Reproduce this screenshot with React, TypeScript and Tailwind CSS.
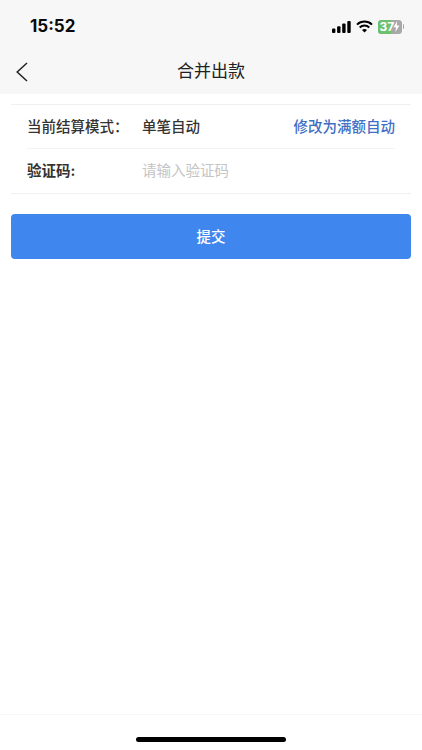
const font = "font-['Inter','Noto_Sans_CJK_SC',sans-serif]";

function StatusIcons() {
  return (
    <div className="flex items-center gap-[5px]">
      <svg width="19" height="12" viewBox="0 0 19 12" fill="#000">
        <rect x="0" y="7.5" width="3.4" height="4.5" rx="1" />
        <rect x="5.1" y="5.2" width="3.4" height="6.8" rx="1" />
        <rect x="10.2" y="2.6" width="3.4" height="9.4" rx="1" />
        <rect x="15.3" y="0" width="3.4" height="12" rx="1" />
      </svg>
      <svg width="17" height="13" viewBox="0 0 17 13" fill="none" stroke="#000">
        <path d="M1 4.6C5.2 0.6 11.8 0.6 16 4.6" strokeWidth="2" />
        <path d="M3.7 7.4C6.4 4.9 10.6 4.9 13.3 7.4" strokeWidth="2" />
        <path d="M8.5 12.6L6 10C7.4 8.8 9.6 8.8 11 10Z" fill="#000" stroke="none" />
      </svg>
      <div className="flex items-center">
        <div className="flex h-[14px] w-[24px] items-center overflow-hidden rounded-[3.5px] bg-[#a8a8a8]">
          <div className="flex h-full w-[13px] items-center bg-[#6cc16e]">
            <span className="pl-[1.5px] text-[12px] leading-none font-bold text-white">37</span>
          </div>
          <svg width="7" height="11" viewBox="0 0 7 11" fill="#fff" className="ml-[1.5px]">
            <path d="M4.2 0L0.5 6.2H3L2.4 11L6.4 4.4H3.8Z" />
          </svg>
        </div>
        <div className="ml-[1px] h-[5px] w-[1px] rounded-r-sm bg-[#a8a8a8]" />
      </div>
    </div>
  );
}

export default function App() {
  return (
    <div className={`flex h-[750px] w-[422px] flex-col overflow-hidden bg-white ${font}`}>
      <div className="h-[94px] bg-[#f7f7f7]">
        <div className="flex h-[50px] items-center justify-between pt-[3px] pr-[18px] pl-[30px]">
          <span className="text-[17px] font-bold text-[#0a0a0a]">15:52</span>
          <StatusIcons />
        </div>
        <div className="relative flex h-[44px] items-center justify-center">
          {/* back chevron, the lucide one is too narrow */}
          <svg width="12" height="20" viewBox="0 0 12 20" fill="none" stroke="#222" strokeWidth="1.5" className="absolute left-[16px]">
            <path d="M11 1L1.2 10L11 19" />
          </svg>
          <span className="text-[17px] text-[#222]">合并出款</span>
        </div>
      </div>

      <div className="mx-[11px] mt-[10px] border-y border-[#f0f0f0] px-[16px]">
        <div className="flex h-[44px] items-center justify-between border-b border-[#f2f2f2]">
          <div className="flex items-center">
            <span className="w-[115px] text-[14.5px] font-medium text-[#333]">当前结算模式：</span>
            <span className="text-[14.5px] font-medium text-[#333]">单笔自动</span>
          </div>
          <span className="text-[14.5px] font-medium text-[#3f6fc6]">修改为满额自动</span>
        </div>
        <div className="flex h-[44px] items-center">
          <span className="w-[115px] text-[14.5px] font-bold text-[#333]">验证码:</span>
          <span className="text-[14.5px] text-[#c4c4c4]">请输入验证码</span>
        </div>
      </div>

      <button className="mx-[11px] mt-[20px] flex h-[45px] items-center justify-center rounded-[4px] bg-[#3f86ee] text-[14.5px] font-medium text-white">
        提交
      </button>

      <div className="mt-auto flex h-[36px] items-start justify-center border-t border-[#f7f7f7] pt-[22px]">
        <div className="h-[5px] w-[150px] rounded-full bg-black" />
      </div>
    </div>
  );
}
